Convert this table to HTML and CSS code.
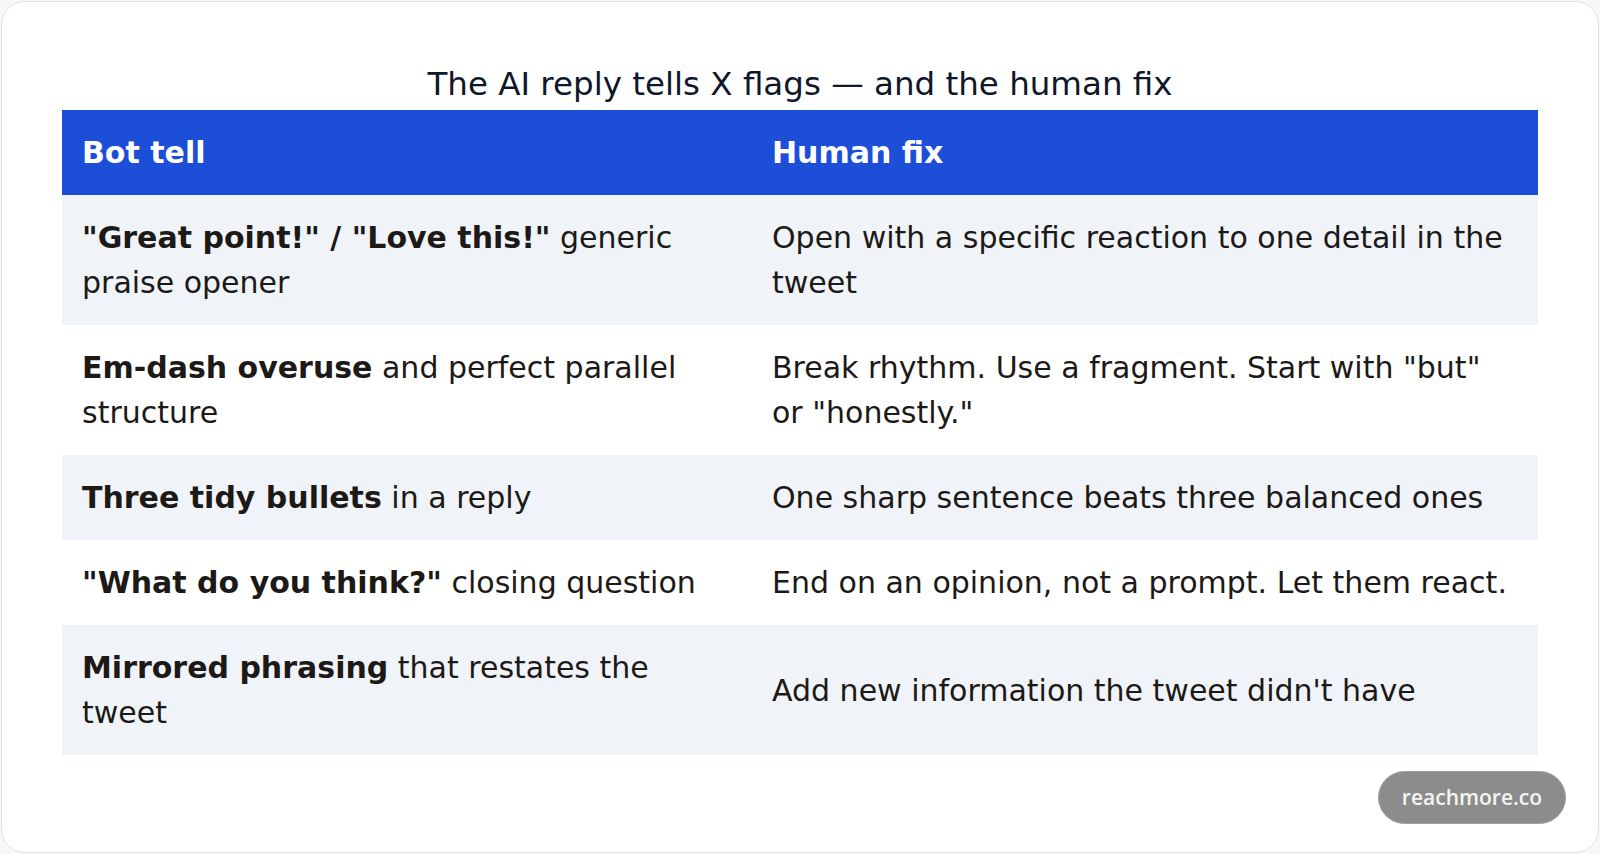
FILE: index.html
```html
<!DOCTYPE html>
<html lang="en">
<head>
    <meta charset="UTF-8">
    <meta name="viewport" content="width=device-width, initial-scale=1.0">
    <title>AI reply tells</title>
    <link rel="stylesheet" href="styles.css">
</head>
<body>
    <div class="card">
        <h1 class="title">The AI reply tells X flags — and the human fix</h1>
        <table class="tells">
            <thead>
                <tr>
                    <th class="col-bot">Bot tell</th>
                    <th>Human fix</th>
                </tr>
            </thead>
            <tbody>
                <tr>
                    <td><strong>"Great point!" / "Love this!"</strong> generic praise opener</td>
                    <td>Open with a specific reaction to one detail in the tweet</td>
                </tr>
                <tr>
                    <td><strong>Em-dash overuse</strong> and perfect parallel structure</td>
                    <td>Break rhythm. Use a fragment. Start with "but" or "honestly."</td>
                </tr>
                <tr>
                    <td><strong>Three tidy bullets</strong> in a reply</td>
                    <td>One sharp sentence beats three balanced ones</td>
                </tr>
                <tr>
                    <td><strong>"What do you think?"</strong> closing question</td>
                    <td>End on an opinion, not a prompt. Let them react.</td>
                </tr>
                <tr>
                    <td><strong>Mirrored phrasing</strong> that restates the tweet</td>
                    <td>Add new information the tweet didn't have</td>
                </tr>
            </tbody>
        </table>
        <div class="badge">reachmore.co</div>
    </div>
</body>
</html>
```

FILE: styles.css
```css
* {
    box-sizing: border-box;
}

body {
    margin: 0;
    padding: 1px;
    background: #f7f7f7;
    font-family: "DejaVu Sans", Verdana, sans-serif;
    color: #1c1917;
}

.card {
    position: relative;
    height: 852px;
    padding: 63px 60px 0;
    background: white;
    border: 1px solid #e2e2e2;
    border-radius: 24px;
}

.title {
    margin: 0 0 7px;
    font-size: 32.5px;
    font-weight: normal;
    line-height: 38px;
    text-align: center;
    color: #0f172a;
}

.tells {
    width: 100%;
    border-collapse: collapse;
    font-size: 30px;
    line-height: 45px;
}

.tells th {
    background: #1d4ed8;
    color: white;
    text-align: left;
    font-weight: bold;
    padding: 20px;
    height: 85px;
}

.col-bot {
    width: 690px;
}

.tells td {
    padding: 20px;
    vertical-align: middle;
}

.tells tbody tr:nth-child(odd) td {
    background: #f0f4f8;
}

.tells strong {
    font-weight: bold;
}

.badge {
    position: absolute;
    right: 32px;
    bottom: 28px;
    height: 53px;
    padding: 0 23px;
    border-radius: 27px;
    background: #8c8c8c;
    border: 1px solid #a0a0a0;
    color: #f4f4f4;
    font-family: "Open Sans", sans-serif;
    font-weight: 600;
    font-size: 21px;
    line-height: 51px;
}
```
